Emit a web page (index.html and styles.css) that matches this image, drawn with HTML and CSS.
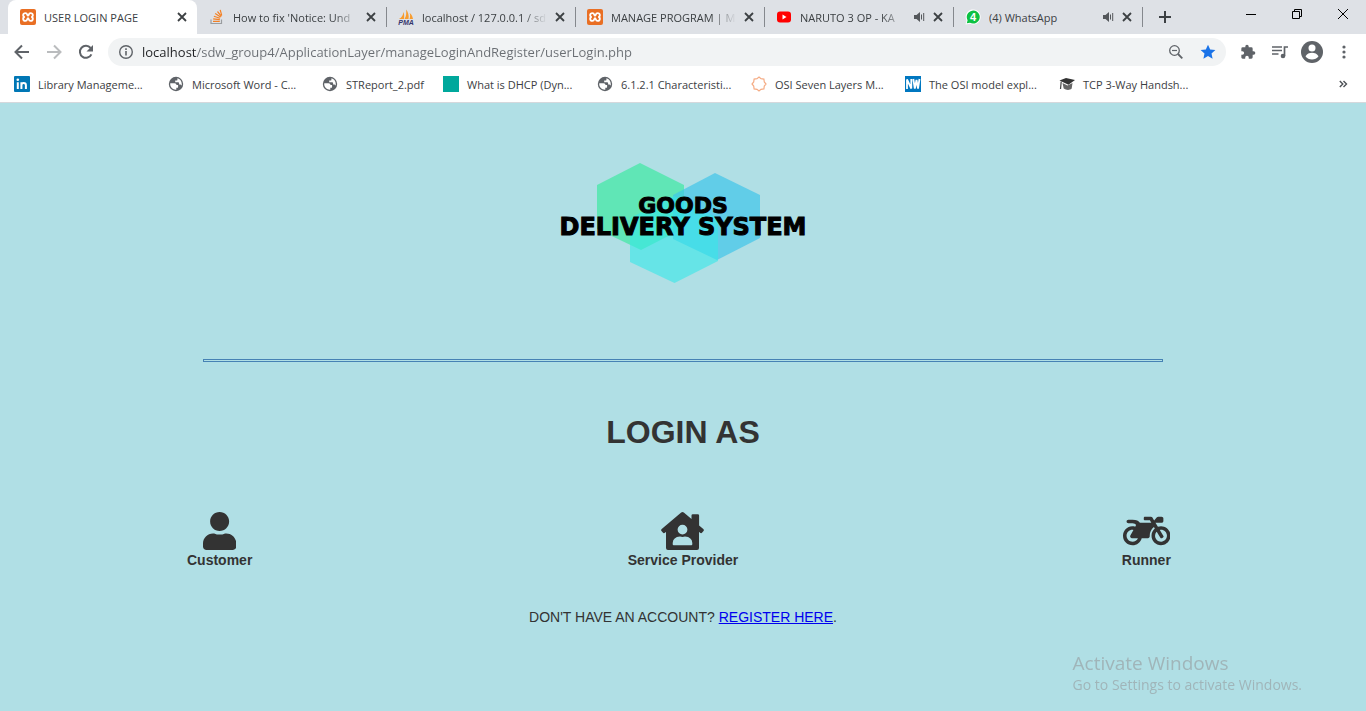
FILE: index.html
```html
<!DOCTYPE html>
<html lang="en">
<head>
<meta charset="utf-8">
<meta name="viewport" content="width=device-width, initial-scale=1">
<title>USER LOGIN PAGE</title>
<link rel="stylesheet" href="styles.css">
</head>
<body>
<svg class="sprite" aria-hidden="true">
  <symbol id="i-close" viewBox="0 0 10 10"><path d="M1 1l8 8M9 1l-8 8" stroke="#3c4043" stroke-width="1.8" fill="none"/></symbol>
  <symbol id="i-audio" viewBox="0 0 12 12"><path d="M1 4h2.500L7 1v10L3.500 8H1z" fill="#54575b"/><path d="M8.500 3.500v5M10.700 2v8" stroke="#54575b" fill="none"/></symbol>
  <symbol id="i-xampp" viewBox="0 0 16 16"><rect width="16" height="16" rx="2" fill="#e96f24"/><path d="M5.500 4.200c-3 0-3 3.400-.800 3.800-2.200.4-2.200 3.800.8 3.800 2.200 0 1.400-2.600 2.500-2.600s.3 2.600 2.500 2.600c3 0 3-3.400.8-3.800 2.200-.4 2.200-3.800-.8-3.800-2.200 0-1.400 2.500-2.500 2.500s-.3-2.500-2.500-2.500z" fill="none" stroke="#fff" stroke-width="1.800"/></symbol>
  <symbol id="i-globe" viewBox="0 0 16 16"><circle cx="8" cy="8" r="7.200" fill="#5f6368"/><path d="M2.300 7.200h4.200c1.400 0 2 .8 2 1.900h1.600v1.800c0 .5-.4.900-.9.900H8.300v1.900C5 13.900 2.200 11.200 2.200 8z" fill="#fff"/><path d="M9.400 2.300c2.600.7 4.400 3 4.400 5.700 0 .5-.1 1-.2 1.400-.6-.3-.9-.9-1.500-.9h-1V7.200c0-.5-.4-.9-.9-.9H7.200V4.600h1.300c.5 0 .9-.4.9-.9z" fill="#fff"/></symbol>
</svg>

<header class="browser">
  <div class="tabstrip">
    <div class="tabs">
      <div class="tab tab--active">
        <svg class="icon"><use href="#i-xampp"/></svg>
        <span class="tab__title">USER LOGIN PAGE</span>
        <button class="tab__close" aria-label="Close tab"><svg><use href="#i-close"/></svg></button>
      </div>
      <div class="tab tab--next">
        <svg class="icon" viewBox="0 0 16 16"><path d="M2 10.500v4h10.500v-4" fill="none" stroke="#9a9da0" stroke-width="1.200"/><path d="M4 12.300h6.800M4.200 9.800l6.600.8M4.900 7.200l6.200 2M6.200 4.500l5.400 3.500M8.500 2.500l3.900 4.800M11.200.8l1.500 5.500" stroke="#f48024" stroke-width="1.200"/></svg>
        <span class="tab__title tab__title--fade">How to fix 'Notice: Und</span>
        <button class="tab__close" aria-label="Close tab"><svg><use href="#i-close"/></svg></button>
      </div>
      <div class="tab">
        <svg class="icon" viewBox="0 0 16 16"><path d="M1 10C4 8.500 5 6 5.500 3c.8 2 .8 4.500.5 7zM6.500 10C8.500 7 8.500 3.500 8 .5c2.200 2.500 3.200 6 2.500 9.500zM11.500 10c.8-2 .8-4 .2-6 2 1.500 3 4 3.300 6z" fill="#f89c2e"/><text x="8" y="15.500" class="pma">PMA</text></svg>
        <span class="tab__title tab__title--fade">localhost / 127.0.0.1 / sd</span>
        <button class="tab__close" aria-label="Close tab"><svg><use href="#i-close"/></svg></button>
      </div>
      <div class="tab">
        <svg class="icon"><use href="#i-xampp"/></svg>
        <span class="tab__title tab__title--fade">MANAGE PROGRAM | M</span>
        <button class="tab__close" aria-label="Close tab"><svg><use href="#i-close"/></svg></button>
      </div>
      <div class="tab">
        <svg class="icon" viewBox="0 0 16 16"><rect x="1" y="2.500" width="14" height="11" rx="3" fill="#f00"/><path d="M6.500 5.500v5L10.500 8z" fill="#fff"/></svg>
        <span class="tab__title tab__title--fade">NARUTO 3 OP - KA</span>
        <svg class="tab__audio"><use href="#i-audio"/></svg>
        <button class="tab__close" aria-label="Close tab"><svg><use href="#i-close"/></svg></button>
      </div>
      <div class="tab">
        <svg class="icon" viewBox="0 0 16 16"><path d="M.5 15.500l1-4A7.500 7.500 0 1 1 5 14.800z" fill="#fff"/><path d="M1.800 14.300l.8-3A6.500 6.500 0 1 1 5 13.700z" fill="#0dc143"/><text x="8" y="12" class="badge">4</text></svg>
        <span class="tab__title">(4) WhatsApp</span>
        <svg class="tab__audio"><use href="#i-audio"/></svg>
        <button class="tab__close" aria-label="Close tab"><svg><use href="#i-close"/></svg></button>
      </div>
    </div>
    <button class="newtab" aria-label="New tab"><svg viewBox="0 0 12 12"><path d="M6 0v12M0 6h12" stroke="#3c4043" stroke-width="2"/></svg></button>
    <div class="window">
      <button aria-label="Minimize"><svg viewBox="0 0 12 12"><path d="M1 6.500h10" stroke="#000"/></svg></button>
      <button aria-label="Restore"><svg viewBox="0 0 12 12"><path d="M1.500 3.500h7v7h-7zM3.500 3.500v-2h7v7h-2" fill="none" stroke="#000"/></svg></button>
      <button aria-label="Close"><svg viewBox="0 0 12 12"><path d="M1 1l10 10M11 1L1 11" stroke="#000"/></svg></button>
    </div>
  </div>

  <div class="toolbar">
    <button class="tool" aria-label="Back"><svg viewBox="0 0 16 16"><path d="M15 8H2M8 1.500L1.500 8 8 14.500" fill="none" stroke="#5f6368" stroke-width="2"/></svg></button>
    <button class="tool" aria-label="Forward"><svg viewBox="0 0 16 16"><path d="M1 8h13M8 1.500L14.500 8 8 14.500" fill="none" stroke="#babcbe" stroke-width="2"/></svg></button>
    <button class="tool" aria-label="Reload"><svg viewBox="0 0 16 16"><path d="M13.400 10.300A6 6 0 1 1 12.600 4" fill="none" stroke="#5f6368" stroke-width="2"/><path d="M15 1v6.500H8.500z" fill="#5f6368"/></svg></button>
    <div class="omnibox">
      <svg class="icon" viewBox="0 0 16 16"><circle cx="8" cy="8" r="6.300" fill="none" stroke="#5f6368" stroke-width="1.400"/><path d="M8 7v4.500M8 4.300v1.600" stroke="#5f6368" stroke-width="1.600"/></svg>
      <input class="omnibox__url" aria-label="Address" type="text" value="localhost/sdw_group4/ApplicationLayer/manageLoginAndRegister/userLogin.php">
      <button class="omnibox__btn" aria-label="Zoom"><svg viewBox="0 0 16 16"><circle cx="6.500" cy="6.500" r="4.800" fill="none" stroke="#5f6368" stroke-width="1.300"/><path d="M4 6.500h5" stroke="#5f6368" stroke-width="1.200"/><path d="M10 10l4.300 4.300" stroke="#5f6368" stroke-width="1.800"/></svg></button>
      <button class="omnibox__btn" aria-label="Bookmark this page"><svg viewBox="0 0 16 16"><path d="M8 .8l2.200 4.800 5.200.5-3.900 3.500 1.100 5.200L8 12.100l-4.600 2.700 1.100-5.200L.6 6.100l5.200-.5z" fill="#1a73e8"/></svg></button>
    </div>
    <button class="tool" aria-label="Extensions"><svg viewBox="0 0 24 24"><path d="M20.500 11H19V7a2 2 0 0 0-2-2h-4V3.500a2.500 2.500 0 0 0-5 0V5H4a2 2 0 0 0-2 2v3.800h1.500a2.700 2.700 0 0 1 0 5.400H2V20c0 1.100.9 2 2 2h3.800v-1.500a2.700 2.700 0 0 1 5.400 0V22H17a2 2 0 0 0 2-2v-4h1.500a2.500 2.500 0 0 0 0-5z" fill="#5f6368"/></svg></button>
    <button class="tool" aria-label="Media"><svg viewBox="0 0 16 16"><path d="M0 3h10M0 6.500h10M0 10h6.500" stroke="#5f6368" stroke-width="1.500"/><path d="M12.500 12V3H16" fill="none" stroke="#5f6368" stroke-width="1.700"/><circle cx="11" cy="12" r="2.300" fill="#5f6368"/></svg></button>
    <button class="tool tool--avatar" aria-label="Profile"><svg viewBox="0 0 22 22"><circle cx="11" cy="11" r="11" fill="#5f6368"/><circle cx="11" cy="7" r="3.500" fill="#fff"/><path d="M4.500 15.300c1.200-2.500 4-3.500 6.500-3.500s5.300 1 6.500 3.500c-1.500 2.200-3.900 3.300-6.500 3.300s-5-1.100-6.500-3.300z" fill="#fff"/></svg></button>
    <button class="tool" aria-label="Menu"><svg viewBox="0 0 16 16" fill="#5f6368"><circle cx="8" cy="3" r="1.600"/><circle cx="8" cy="8" r="1.600"/><circle cx="8" cy="13" r="1.600"/></svg></button>
  </div>

  <nav class="bookmarks" aria-label="Bookmarks">
    <a class="bookmark" href="#"><svg class="icon" viewBox="0 0 16 16"><rect width="16" height="16" rx="1" fill="#0077b5"/><path d="M3.800 6.200V13M7.400 13V6.200M7.400 13V9.300c0-3 4.500-3 4.500 0V13" fill="none" stroke="#fff" stroke-width="2"/><circle cx="3.800" cy="3.700" r="1.300" fill="#fff"/></svg><span>Library Manageme...</span></a>
    <a class="bookmark" href="#"><svg class="icon"><use href="#i-globe"/></svg><span>Microsoft Word - C...</span></a>
    <a class="bookmark bookmark--short" href="#"><svg class="icon"><use href="#i-globe"/></svg><span>STReport_2.pdf</span></a>
    <a class="bookmark" href="#"><svg class="icon" viewBox="0 0 16 16"><path d="M0 0h16v16H0z" fill="#00a89c"/></svg><span>What is DHCP (Dyn...</span></a>
    <a class="bookmark" href="#"><svg class="icon"><use href="#i-globe"/></svg><span>6.1.2.1 Characteristi...</span></a>
    <a class="bookmark" href="#"><svg class="icon" viewBox="0 0 16 16"><path d="M8 1l2 1.700 2.900.4.400 2.900L15 8l-1.700 2-.4 2.900-2.900.4L8 15l-2-1.700-2.900-.4-.4-2.900L1 8l1.700-2 .4-2.900L6 2.700z" fill="none" stroke="#f5ac85" stroke-width="1.200"/></svg><span>OSI Seven Layers M...</span></a>
    <a class="bookmark" href="#"><svg class="icon" viewBox="0 0 16 16"><path d="M0 0h16v16H0z" fill="#0077c0"/><path d="M2 13V3.500L6.300 12.500V3M8.300 3l1.500 9.500L11.500 4l1.500 8.500L14.500 3" fill="none" stroke="#fff" stroke-width="1.800"/></svg><span>The OSI model expl...</span></a>
    <a class="bookmark" href="#"><svg class="icon" viewBox="0 0 16 16"><path d="M3.500 7l5 2.500 5-2.500-.8 5.500c-2 2-5.500 1.800-8 0z" fill="#666"/><path d="M.5 4.500L7 2l9 2-6.500 4.800z" fill="#333"/><path d="M2.200 5.500L1.500 13" stroke="#444" stroke-width="1.200"/></svg><span>TCP 3-Way Handsh...</span></a>
    <button class="bookmarks__more" aria-label="More bookmarks"><svg viewBox="0 0 8 8"><path d="M.8 1l3 3-3 3M4.500 1l3 3-3 3" fill="none" stroke="#4d5156" stroke-width="1.400"/></svg></button>
  </nav>
</header>

<main class="page">
  <svg class="logo" viewBox="0 0 256 120" role="img" aria-label="Goods Delivery System">
    <path d="M85 0l44 22v43l-43 22-44-21V22z" fill="#3ee8a2" fill-opacity=".7"/>
    <path d="M160 10l45 22v43l-43 22-44-21V32z" fill="#40c4e9" fill-opacity=".7"/>
    <path d="M119 33l44 22v43l-43.500 22L75 99V55z" fill="#36e8e7" fill-opacity=".6"/>
    <text class="logo__text logo__text--small" x="128" y="50">GOODS</text>
    <text class="logo__text" x="128" y="72">DELIVERY SYSTEM</text>
  </svg>
  <hr class="rule">
  <h1 class="heading">LOGIN AS</h1>
  <nav class="roles" aria-label="Login roles">
    <a class="role" href="#">
      <svg viewBox="0 0 448 512"><path d="M224 256c70.700 0 128-57.300 128-128S294.700 0 224 0 96 57.300 96 128s57.300 128 128 128zm89.600 32h-16.700c-22.200 10.200-46.900 16-72.900 16s-50.600-5.800-72.900-16h-16.700C60.200 288 0 348.200 0 422.400V464c0 26.500 21.500 48 48 48h352c26.500 0 48-21.500 48-48v-41.600c0-74.200-60.200-134.400-134.400-134.400z"/></svg>
      <span>Customer</span>
    </a>
    <a class="role" href="#">
      <svg viewBox="0 0 43 38"><path fill-rule="evenodd" d="M20.200.6q1.300-1.200 2.600 0L30.500 7V3.500q0-1.300 1.300-1.300h5q1.300 0 1.300 1.300v10l4.200 3.600q1 1 .2 2l-1.300 1.500q-1 1-2.200.1L38 19.800V36q0 2-2 2H7q-2 0-2-2V19.800l-1 .9q-1.200.9-2.200-.1L.500 19.100q-.8-1 .2-2zM21.500 12.700a4.900 4.900 0 1 0 0 9.800 4.900 4.900 0 0 0 0-9.800zM19 24.500q-7 .5-7.300 6.500v1.200q0 1 1 1h17.600q1 0 1-1V31q-.3-6-7.300-6.500-2.500.8-5 0z"/></svg>
      <span>Service Provider</span>
    </a>
    <a class="role" href="#">
      <svg viewBox="0 0 640 512"><path d="M512.900 192c-14.900-.1-29.100 2.300-42.400 6.900L437.600 144H520c13.300 0 24-10.700 24-24V88c0-13.300-10.700-24-24-24h-45.300c-6.800 0-13.300 2.900-17.800 7.900l-37.500 41.700-22.800-38C392.200 68.400 384.400 64 376 64h-80c-8.800 0-16 7.200-16 16v16c0 8.800 7.200 16 16 16h66.400l19.200 32H227.900c-17.700-23.100-44.900-40-99.900-40H72.500C59 104 47.700 115 48 128.500c.2 13 10.900 23.500 24 23.500h56c24.500 0 38.700 10.900 47.800 24.800l-11.300 20.500c-13-3.900-26.900-5.700-41.300-5.200C55.900 194.500 1.600 249.600 0 317c-1.600 72.100 56.300 131 128 131 59.600 0 109.700-40.800 124-96h84.200c13.700 0 24.600-11.400 24-25.100-2.100-47.100 17.500-93.700 56.200-125l12.500 20.800c-27.600 23.700-45.100 58.900-44.800 98.200.5 69.600 57.200 126.500 126.800 127.100 71.600.7 129.800-57.500 129.200-129.100-.7-69.600-57.600-126.400-127.200-126.900zM128 400c-44.100 0-80-35.900-80-80s35.900-80 80-80c4.200 0 8.400.3 12.500 1L99 316.400c-8.800 16 2.800 35.600 21 35.600h81.300c-12.400 28.200-40.600 48-73.300 48zm463.900-75.600c-2.200 40.600-35 73.400-75.500 75.500-46.100 2.500-84.400-34.300-84.400-79.900 0-21.400 8.400-40.800 22.100-55.100l49.400 82.400c4.500 7.600 14.400 10 22 5.500l13.700-8.200c7.600-4.500 10-14.400 5.500-22l-48.600-80.900c5.200-1.100 10.500-1.600 15.900-1.600 45.600-.1 82.300 38.200 79.900 84.300z"/></svg>
      <span>Runner</span>
    </a>
  </nav>
  <p class="signup">DON'T HAVE AN ACCOUNT? <a href="#">REGISTER HERE</a>.</p>
</main>

<aside class="watermark">
  <p class="watermark__title">Activate Windows</p>
  <p class="watermark__text">Go to Settings to activate Windows.</p>
</aside>
</body>
</html>
```
FILE: styles.css
```css
* { box-sizing: border-box; }

body {
  margin: 0;
  min-height: 100vh;
  display: flex;
  flex-direction: column;
  background: #b0dfe5;
  color: #333;
  font-family: "Liberation Sans", Arial, sans-serif;
  font-size: 14px;
}

button {
  border: 0;
  padding: 0;
  background: none;
  display: flex;
  align-items: center;
  justify-content: center;
  flex: none;
}

.sprite { display: none; }
.icon { width: 16px; height: 16px; flex: none; }

/* Browser frame */
.browser {
  background: #fff;
  color: #3c4043;
  font-family: "Open Sans", "Noto Sans", sans-serif;
  font-size: 11px;
  border-bottom: 1px solid #d5d8dc;
}

.tabstrip {
  display: flex;
  height: 34px;
  padding-left: 8px;
  background: #dee1e6;
}

.tabs { display: flex; flex: 0 1 1134px; min-width: 0; }

.tab {
  flex: 1 1 0;
  min-width: 0;
  display: flex;
  align-items: center;
  gap: 8px;
  padding: 0 10px 0 12px;
  background: linear-gradient(#85888d, #85888d) left center / 1px 20px no-repeat;
}

.tab--active {
  background: #fff;
  border-radius: 8px 8px 0 0;
}

.tab--next { background: none; }

.tab__title {
  flex: 1;
  min-width: 0;
  overflow: hidden;
  white-space: nowrap;
}

.tab__title--fade {
  -webkit-mask-image: linear-gradient(to left, transparent, #000 24px);
  mask-image: linear-gradient(to left, transparent, #000 24px);
}

.tab__audio { width: 12px; height: 12px; flex: none; }
.tab__close svg { width: 10px; height: 10px; }

.newtab {
  width: 46px;
  background: linear-gradient(#85888d, #85888d) left center / 1px 20px no-repeat;
}
.newtab svg { width: 12px; height: 12px; }

.window { display: flex; height: 28px; margin-left: auto; }
.window button { width: 46px; }
.window svg { width: 12px; height: 12px; }

.toolbar {
  display: flex;
  align-items: center;
  height: 36px;
  padding: 0 6px;
}

.tool { width: 32px; height: 28px; }
.tool svg { width: 16px; height: 16px; }
.tool--avatar svg { width: 22px; height: 22px; }

.omnibox {
  flex: 1;
  display: flex;
  align-items: center;
  gap: 8px;
  height: 28px;
  margin: 0 6px;
  padding: 0 10px;
  border-radius: 14px;
  background: #f1f3f4;
}

.omnibox__url {
  flex: 1;
  min-width: 0;
  border: 0;
  padding: 0;
  outline: 0;
  font: 13px "Open Sans", "Noto Sans", sans-serif;
  color: transparent;
  background: linear-gradient(to right, #202124 55px, #6a6e73 55px);
  -webkit-background-clip: text;
  background-clip: text;
}

.omnibox__btn { width: 16px; margin-left: 8px; }
.omnibox__btn svg { width: 16px; height: 16px; }

.bookmarks {
  display: flex;
  align-items: center;
  height: 32px;
  padding: 0 18px 4px 14px;
}

.bookmark {
  flex: 0 1 154px;
  min-width: 0;
  display: flex;
  align-items: center;
  gap: 8px;
  color: inherit;
  text-decoration: none;
  white-space: nowrap;
}

.bookmark--short { flex-basis: 121px; }

.bookmarks__more { margin-left: auto; }
.bookmarks__more svg { width: 10px; height: 8px; }

.pma {
  font: italic bold 7px "Liberation Sans", sans-serif;
  text-anchor: middle;
  fill: #34346c;
}

.badge {
  font: bold 11px "Liberation Sans", sans-serif;
  text-anchor: middle;
  fill: #fff;
}

/* Login page */
.page {
  flex: 1;
  display: flex;
  flex-direction: column;
  align-items: center;
  padding: 60px 0 40px;
}

.logo { width: 256px; height: 120px; overflow: visible; }

.logo__text {
  font: bold 24px "DejaVu Sans", sans-serif;
  text-anchor: middle;
  fill: #000;
  stroke: #000;
  stroke-width: 1px;
}

.logo__text--small { font-size: 22px; }

.rule {
  width: 960px;
  max-width: 90%;
  min-height: 3px;
  margin: 76px 0 0;
  border: 1px solid #4682b4;
}

.heading {
  margin: 52px 0 0;
  font-size: 32px;
  line-height: 36px;
}

.roles {
  width: 100%;
  display: grid;
  grid-template-columns: repeat(3, 1fr);
  gap: 24px;
  margin-top: 62px;
}

.role {
  display: flex;
  flex-direction: column;
  align-items: center;
  gap: 2px;
  color: #333;
  font-weight: bold;
  line-height: 16px;
  text-decoration: none;
}

.role svg { height: 38px; fill: #333; }

.signup { margin: 41px 0 0; line-height: 16px; }
.signup a { color: #00e; }

.watermark {
  position: fixed;
  right: 64px;
  bottom: 16px;
  font-family: "Open Sans", "Noto Sans", sans-serif;
  color: #a0b5b9;
}

.watermark p { margin: 0; }
.watermark__title { font-size: 19px; line-height: 24px; }
.watermark__text { font-size: 14px; line-height: 20px; }
```
